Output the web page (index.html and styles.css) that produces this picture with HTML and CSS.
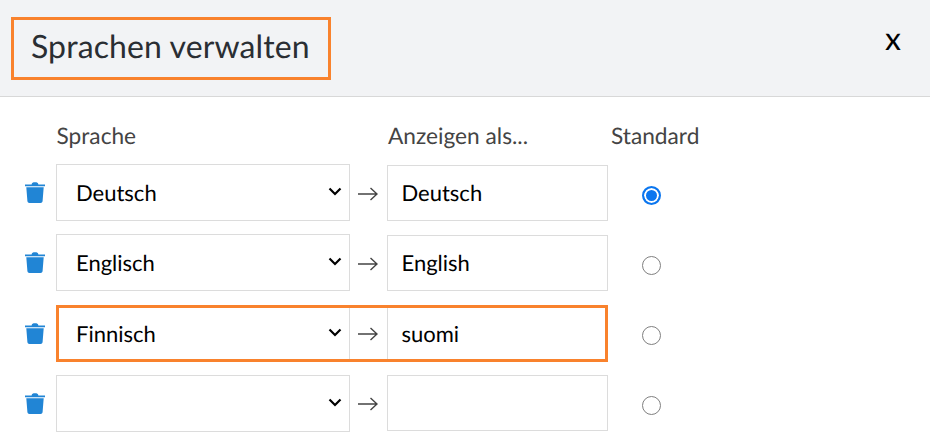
FILE: index.html
```html
<!DOCTYPE html>
<html lang="de">
<head>
<meta charset="utf-8">
<title>Sprachen verwalten</title>
<link rel="stylesheet" href="styles.css">
</head>
<body>
<svg class="defs" width="0" height="0" aria-hidden="true">
  <symbol id="trash" viewBox="0 0 20 22">
    <path d="M0 3.4h20v1.900H0zM6.600 3.400C7 1.600 7.800 1.200 10 1.200s3 .4 3.400 2.200z"/>
    <path d="M1.300 6.300h17.400l-1.100 13.600c-.1 1.300-.9 2-2.100 2H4.500c-1.200 0-2-.7-2.100-2z"/>
  </symbol>
  <symbol id="chev" viewBox="0 0 14 9">
    <path d="M1.500 1.500 7 7l5.500-5.500" fill="none" stroke="currentColor" stroke-width="2.200"/>
  </symbol>
  <symbol id="arrow" viewBox="0 0 20 14">
    <path d="M0 7h19M12.500 1l6.500 6-6.500 6" fill="none" stroke="currentColor" stroke-width="1.400"/>
  </symbol>
</svg>
<div class="dialog">
  <header class="head">
    <h1 class="title">Sprachen verwalten</h1>
    <span class="close">x</span>
  </header>
  <main class="body">
    <div class="labels">
      <span class="lab lab-lang">Sprache</span>
      <span class="lab lab-show">Anzeigen als...</span>
      <span class="lab">Standard</span>
    </div>
    <div class="rows">
      <div class="row">
        <span class="del"><svg class="ic-trash"><use href="#trash"/></svg></span>
        <div class="select"><span>Deutsch</span><svg class="ic-chev"><use href="#chev"/></svg></div>
        <span class="to"><svg class="ic-arrow"><use href="#arrow"/></svg></span>
        <div class="input">Deutsch</div>
        <span class="pick"><span class="radio on"></span></span>
      </div>
      <div class="row">
        <span class="del"><svg class="ic-trash"><use href="#trash"/></svg></span>
        <div class="select"><span>Englisch</span><svg class="ic-chev"><use href="#chev"/></svg></div>
        <span class="to"><svg class="ic-arrow"><use href="#arrow"/></svg></span>
        <div class="input">English</div>
        <span class="pick"><span class="radio"></span></span>
      </div>
      <div class="row">
        <span class="del"><svg class="ic-trash"><use href="#trash"/></svg></span>
        <div class="select"><span>Finnisch</span><svg class="ic-chev"><use href="#chev"/></svg></div>
        <span class="to"><svg class="ic-arrow"><use href="#arrow"/></svg></span>
        <div class="input">suomi</div>
        <span class="pick"><span class="radio"></span></span>
        <span class="mark"></span>
      </div>
      <div class="row">
        <span class="del"><svg class="ic-trash"><use href="#trash"/></svg></span>
        <div class="select"><span></span><svg class="ic-chev"><use href="#chev"/></svg></div>
        <span class="to"><svg class="ic-arrow"><use href="#arrow"/></svg></span>
        <div class="input"></div>
        <span class="pick"><span class="radio"></span></span>
      </div>
    </div>
  </main>
</div>
</body>
</html>
```
FILE: styles.css
```css
* { box-sizing: border-box; }
html, body { margin: 0; padding: 0; }
body {
  width: 930px;
  height: 448px;
  overflow: hidden;
  background: #fff;
  font-family: Lato, "Liberation Sans", sans-serif;
  color: #000;
  text-rendering: geometricPrecision;
}
.defs { position: absolute; }
.head {
  height: 97px;
  background: #f2f3f5;
  border-bottom: 1px solid #d8d8d8;
  padding: 17px 29px 0 11px;
  display: flex;
  justify-content: space-between;
  align-items: flex-start;
}
.title {
  margin: 0;
  width: 320px;
  height: 63px;
  border: 3px solid #f9822d;
  padding-left: 17px;
  font-size: 32px;
  font-weight: 400;
  line-height: 52px;
  letter-spacing: 0.11px;
  color: #2a2e33;
}
.close {
  font-size: 32px;
  line-height: 42px;
  color: #000;
}
.labels {
  display: flex;
  padding: 25px 0 0 56.500px;
  height: 67px;
  font-size: 22.700px;
  line-height: 27px;
  color: #444;
}
.lab-lang { width: 331.500px; }
.lab-show { width: 223px; }
.rows {
  display: flex;
  flex-direction: column;
  gap: 13.33px;
}
.row {
  position: relative;
  display: flex;
  align-items: center;
  height: 57px;
  font-size: 22px;
}
.del {
  width: 56px;
  padding: 0 0 1px 25px;
  display: flex;
  color: #2185d5;
}
.ic-trash { width: 20px; height: 22px; fill: currentColor; }
.select {
  width: 294px;
  height: 57px;
  border: 1px solid #dcdcdc;
  padding: 0 7px 0 19px;
  display: flex;
  align-items: center;
  justify-content: space-between;
}
.ic-chev { width: 14px; height: 9px; color: #000; margin-top: -2px; }
.to {
  width: 37px;
  display: flex;
  justify-content: center;
  color: #444;
  padding: 2px 1px 0 0;
}
.ic-arrow { width: 20px; height: 14px; }
.input {
  width: 221px;
  height: 56px;
  border: 1px solid #dcdcdc;
  padding-left: 13.500px;
  display: flex;
  align-items: center;
}
.pick {
  width: 87px;
  display: flex;
  justify-content: center;
  padding-top: 5px;
}
.radio {
  width: 19px;
  height: 19px;
  border-radius: 50%;
  border: 1.500px solid #808080;
  background: #fff;
}
.radio.on {
  border: 2px solid #0b76ef;
  background: #0b76ef;
  box-shadow: inset 0 0 0 2px #fff;
}
.mark {
  position: absolute;
  left: 56px;
  top: 0;
  width: 552px;
  height: 57px;
  border: 3px solid #f9822d;
  pointer-events: none;
}
```
